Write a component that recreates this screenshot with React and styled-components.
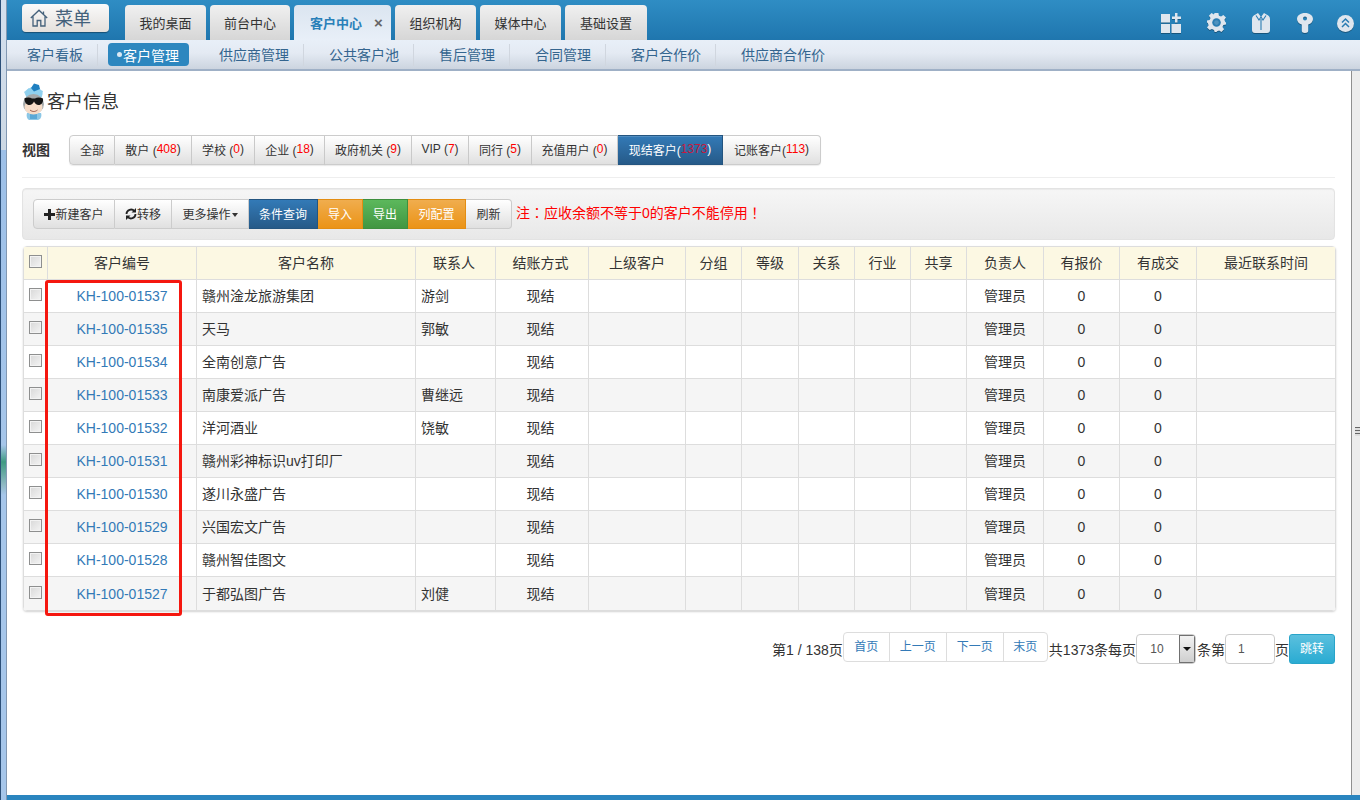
import React from 'react';
import styled, { createGlobalStyle } from 'styled-components';

const FONT = '"Liberation Sans", "Noto Sans CJK SC", sans-serif';

const Global = createGlobalStyle`
    html, body {
        margin: 0;
        padding: 0;
        height: 100%;
        overflow: hidden;
        background: #fff;
        font-family: ${FONT};
        color: #333;
    }
    * { box-sizing: border-box; }
`;

const Page = styled.div`
    display: flex;
    width: 1360px;
    height: 800px;
`;

const LeftEdge = styled.div`
    width: 7px;
    flex: none;
    border-right: 1px solid #8298b2;
    border-left: 1px solid #2c4f78;
    background: linear-gradient(180deg, #d3dfee 0, #ccd8e4 150px, #9dc0e8 150px, #a6c6ea 445px, #3f9a82 462px, #8fb9c4 485px, #a6c6ea 495px, #a6c6ea 100%);
`;

const Frame = styled.div`
    flex: 1;
    min-width: 0;
    display: flex;
    flex-direction: column;
`;

const Header = styled.header`
    height: 40px;
    flex: none;
    display: flex;
    align-items: flex-start;
    padding-left: 15px;
    background: linear-gradient(180deg, #2f8dc4 0, #1f76ae 100%);
`;

const MenuButton = styled.div`
    width: 87px;
    height: 28px;
    margin-top: 4px;
    display: flex;
    align-items: center;
    gap: 7px;
    padding: 0 0 2px 8px;
    border-radius: 4px;
    background: linear-gradient(180deg, #fafafa 0, #e4e0dc 100%);
    box-shadow: 0 1px 1px rgba(0, 0, 0, 0.35);
    color: #44617b;
    font-size: 18px;
`;

const MainTabs = styled.nav`
    display: flex;
    margin-left: 16px;
    margin-top: 5px;
    gap: 4px;
`;

const MainTab = styled.div`
    height: 35px;
    width: ${p => p.$w}px;
    display: flex;
    align-items: center;
    justify-content: ${p => (p.$active ? 'flex-start' : 'center')};
    gap: 12px;
    padding-left: ${p => (p.$active ? 16 : 0)}px;
    font-size: 13px;
    border-radius: 4px 4px 0 0;
    color: ${p => (p.$active ? '#2a80b9' : '#333')};
    font-weight: ${p => (p.$active ? 'bold' : 'normal')};
    background: ${p => (p.$active
        ? 'linear-gradient(180deg, #dbe5f0 0, #e8eff8 100%)'
        : 'linear-gradient(180deg, #f0f0f0 0, #d6d6d6 100%)')};
`;

const TabClose = styled.span`
    color: #666;
    font-size: 15px;
    font-weight: bold;
    line-height: 1;
`;

const IconTray = styled.div`
    margin-left: auto;
    display: flex;
    align-items: flex-start;
    padding: 13px 6px 0 0;
`;

const HeaderIcon = styled.svg`
    display: block;
    flex: none;
    margin-left: ${p => p.$gap}px;
    margin-top: ${p => p.$top || 0}px;
    filter: drop-shadow(0 1px 0 rgba(0, 0, 0, 0.3));
`;

const SubNav = styled.nav`
    height: 31px;
    flex: none;
    display: flex;
    align-items: center;
    padding-left: 20px;
    background: linear-gradient(180deg, #e8eff8 0, #e4eaf3 45%, #ccd4df 100%);
    border-bottom: 2px solid #9fb0c6;
`;

const SubItem = styled.div`
    font-size: 14px;
    line-height: 22px;
    color: #34658f;
    padding-right: 14px;
    margin-right: 25px;
    border-right: 1px solid #d0d6df;
    &:last-child { border-right: 0; }
`;

const SubItemActive = styled.div`
    display: flex;
    align-items: center;
    height: 23px;
    width: 81px;
    margin-left: -15px;
    margin-right: 30px;
    padding-left: 9px;
    font-size: 14px;
    color: #fff;
    background: #2d87bf;
    border-radius: 4px;
    &::before {
        content: '';
        width: 5px;
        height: 5px;
        margin-right: 1px;
        border-radius: 50%;
        background: #dbe9f4;
    }
`;

const Body = styled.div`
    flex: 1;
    min-height: 0;
    display: flex;
`;

const Content = styled.main`
    flex: 1;
    min-width: 0;
    position: relative;
    padding: 12px 16px 0 15px;
`;

const Splitter = styled.div`
    width: 9px;
    flex: none;
    display: flex;
    align-items: center;
    justify-content: flex-end;
    background: #ececec;
    border-left: 1px solid #8f8f8f;
`;

const Grip = styled.div`
    width: 5px;
    height: 9px;
    transform: translateY(-2px);
    background: repeating-linear-gradient(180deg, #666 0, #666 1px, #ddd 1px, #ddd 3px);
`;

const BottomBar = styled.div`
    height: 5px;
    flex: none;
    background: #2a85bf;
`;

const TitleRow = styled.div`
    display: flex;
    align-items: center;
    height: 38px;
`;

const PageTitle = styled.h1`
    margin: 0 0 5px 1px;
    font-size: 18px;
    font-weight: normal;
    color: #333;
`;

const ViewRow = styled.div`
    display: flex;
    align-items: center;
    margin-top: 14px;
    padding-bottom: 12px;
    border-bottom: 1px solid #eee;
`;

const ViewLabel = styled.b`
    font-size: 14px;
    width: 47px;
    color: #333;
    padding-bottom: 2px;
`;

const Segments = styled.div`
    display: flex;
    height: 30px;
`;

const ViewButton = styled.div`
    height: 30px;
    width: ${p => p.$w}px;
    display: flex;
    align-items: center;
    justify-content: center;
    padding-bottom: 2px;
    white-space: pre;
    font-size: 12px;
    color: ${p => (p.$active ? '#fff' : '#333')};
    border: 1px solid ${p => (p.$active ? '#245580' : '#ccc')};
    border-left-width: ${p => (p.$first ? 1 : 0)}px;
    border-radius: ${p => (p.$first ? '4px 0 0 4px' : p.$last ? '0 4px 4px 0' : '0')};
    background: ${p => (p.$active
        ? 'linear-gradient(180deg, #337ab7 0, #265a88 100%)'
        : 'linear-gradient(180deg, #fff 0, #e0e0e0 100%)')};
    box-shadow: inset 0 1px 0 rgba(255, 255, 255, 0.15), 0 1px 1px rgba(0, 0, 0, 0.08);
`;

const Count = styled.span`
    color: ${p => (p.$dim ? '#c8183c' : '#f00')};
`;

const Toolbar = styled.div`
    display: flex;
    align-items: center;
    height: 52px;
    margin-top: 10px;
    padding-left: 10px;
    border: 1px solid #e3e3e3;
    border-radius: 4px;
    background: linear-gradient(180deg, #f6f6f6 0, #e8e8e8 100%);
    box-shadow: inset 0 1px 1px rgba(0, 0, 0, 0.05);
`;

const TONES = {
    plain: ['#fff', '#e0e0e0', '#ccc', '#333'],
    blue: ['#337ab7', '#265a88', '#245580', '#fff'],
    orange: ['#f0ad4e', '#eb9316', '#e38d13', '#fff'],
    green: ['#5cb85c', '#419641', '#3e8f3e', '#fff'],
};

const ToolButton = styled.div`
    height: 30px;
    width: ${p => p.$w}px;
    flex: none;
    display: flex;
    align-items: center;
    justify-content: center;
    padding-bottom: 2px;
    font-size: 12px;
    color: ${p => TONES[p.$tone || 'plain'][3]};
    background: linear-gradient(180deg, ${p => TONES[p.$tone || 'plain'][0]} 0, ${p => TONES[p.$tone || 'plain'][1]} 100%);
    border: 1px solid ${p => TONES[p.$tone || 'plain'][2]};
    border-left-width: ${p => (p.$first ? 1 : 0)}px;
    border-radius: ${p => (p.$first ? '4px 0 0 4px' : p.$last ? '0 4px 4px 0' : '0')};
`;

const Caret = styled.i`
    width: 0;
    height: 0;
    margin-left: 1px;
    margin-top: 3px;
    border-top: 4px solid #333;
    border-left: 3.5px solid transparent;
    border-right: 3.5px solid transparent;
`;

const Notice = styled.span`
    margin-left: 4px;
    padding-bottom: 4px;
    font-family: "Liberation Sans", "Noto Sans CJK TC", sans-serif;
    font-size: 14px;
    color: #f00;
`;

const Table = styled.table`
    margin: 6px 0 0 1px;
    width: 1312px;
    table-layout: fixed;
    border-collapse: separate;
    border-spacing: 0;
    border: 1px solid #ddd;
    border-radius: 4px;
    box-shadow: 0 1px 2px rgba(0, 0, 0, 0.18);
    font-size: 14px;
`;

const HeadCell = styled.th`
    height: 33px;
    padding: 0 ${p => (p.$nudge ? 3 : 0)}px 2px 0;
    font-weight: normal;
    color: #333;
    text-align: center;
    background: #fcf8e3;
    border-right: 1px solid #ddd;
    border-bottom: 1px solid #ddd;
    &:last-child { border-right: 0; }
`;

const Cell = styled.td`
    height: 33px;
    padding: 0 ${p => (p.$nudge ? 3 : 0)}px ${p => (p.$num ? 0 : 2)}px ${p => (p.$left ? 5 : 0)}px;
    text-align: ${p => (p.$left ? 'left' : 'center')};
    color: #333;
    border-right: 1px solid #ddd;
    border-bottom: 1px solid #ddd;
    &:last-child { border-right: 0; }
    tr:last-child > & { border-bottom: 0; }
`;

const Row = styled.tr`
    background: ${p => (p.$odd ? '#f5f5f5' : '#fff')};
`;

const CodeLink = styled.a`
    color: #337ab7;
    text-decoration: none;
`;

const Check = styled.span`
    display: block;
    width: 13px;
    height: 13px;
    margin: -1px auto 0 5px;
    border: 1px solid #8e8f8f;
    background: linear-gradient(135deg, #d8d8d8 0, #f4f4f4 100%);
    box-shadow: inset 0 0 0 1px #f3f3f3;
`;

const Highlight = styled.div`
    position: absolute;
    left: 38px;
    top: 209px;
    width: 137px;
    height: 336px;
    border: 3px solid #f5170f;
    border-radius: 3px;
    pointer-events: none;
`;

const Pager = styled.div`
    display: flex;
    justify-content: flex-end;
    align-items: center;
    margin-top: 21px;
    height: 33px;
    font-size: 14px;
    color: #333;
`;

const PagerLinks = styled.div`
    display: flex;
    align-self: flex-start;
    height: 30px;
    margin-right: 1px;
    border: 1px solid #ddd;
    border-radius: 4px;
`;

const PagerLink = styled.a`
    width: ${p => p.$w}px;
    display: flex;
    align-items: center;
    justify-content: center;
    padding-bottom: 4px;
    font-size: 12px;
    color: #337ab7;
    border-left: ${p => (p.$first ? '0' : '1px solid #ddd')};
`;

const SelectBox = styled.div`
    width: 60px;
    height: 30px;
    margin-right: 1px;
    display: flex;
    align-items: center;
    border: 1px solid #ccc;
    border-radius: 4px;
    font-size: 12px;
    color: #555;
    overflow: hidden;
`;

const SelectValue = styled.span`
    flex: 1;
    text-align: center;
    padding-right: 2px;
`;

const SelectArrow = styled.span`
    width: 16px;
    height: 28px;
    display: flex;
    align-items: center;
    justify-content: center;
    border: 1px solid #707070;
    background: linear-gradient(180deg, #f2f2f2 0, #cfcfcf 100%);
    &::after {
        content: '';
        border-top: 4px solid #111;
        border-left: 4px solid transparent;
        border-right: 4px solid transparent;
    }
`;

const PageInput = styled.div`
    width: 50px;
    height: 30px;
    display: flex;
    align-items: center;
    padding-left: 12px;
    border: 1px solid #ccc;
    border-radius: 4px;
    font-size: 12px;
    color: #555;
`;

const JumpButton = styled.div`
    width: 46px;
    height: 30px;
    display: flex;
    align-items: center;
    justify-content: center;
    padding-bottom: 2px;
    font-size: 12px;
    color: #fff;
    border: 1px solid #28a4c9;
    border-radius: 3px;
    background: linear-gradient(180deg, #5bc0de 0, #2aabd2 100%);
`;

function Mascot() {
    return (
        <svg width="24" height="38" viewBox="0 0 24 38" style={{ display: 'block', flex: 'none' }}>
            <path d="M5 30c-1 3 0 6 2 7h9c3-1 4-4 3-7z" fill="#8cc7e6" />
            <path d="M8 31h7v5H8z" fill="#5aa8d6" />
            <path d="M2 9 7 5l2 5-5 3zM21 8l-5-2-1 5 5 1z" fill="#9ad3ee" />
            <ellipse cx="12" cy="11" rx="8.500" ry="7" fill="#8fd0ee" />
            <path d="M9 5l3-4.500 5 1.500 1 4-6 2.500z" fill="#1f7fc0" />
            <ellipse cx="11.500" cy="21" rx="10.500" ry="10" fill="#a3a8aa" />
            <ellipse cx="11.500" cy="24" rx="9" ry="7.500" fill="#f6dcc8" />
            <path d="M2 15.500c3-1.500 6-1.500 8 0h3c2-1.500 5-1.500 8 0 .5 4-1.500 6.500-4.500 6.500-2 0-3.500-1.500-4.500-3.500-1 2-2.500 3.500-4.500 3.500-3 0-5-2.500-5-6.500z" fill="#151515" />
            <path d="M8 27c2.500 2 5 2 7.500 0" stroke="#9b5a4a" strokeWidth="1" fill="none" />
        </svg>
    );
}

function HomeIcon() {
    return (
        <svg width="18" height="18" viewBox="0 0 18 18" fill="none" stroke="#44617b" strokeWidth="1.300" style={{ marginTop: 2 }}>
            <path d="M.8 9 9 1.200 17.200 9M3 7.500v9.500h4.200v-5.500h3.600V17H15V7.500M13.500 2.500v3" />
        </svg>
    );
}

function HeaderIcons() {
    return (
        <IconTray>
            <HeaderIcon $gap={0} width="20" height="20" viewBox="0 0 20 20" fill="#dfe6ee">
                <path d="M0 1h9v8.500H0zM0 11h9v9H0zM10.500 11H20v9h-9.500zM14 0h2.500v3.500H20V6h-3.500v3.500H14V6h-3V3.500h3z" />
            </HeaderIcon>
            <HeaderIcon $gap={26} width="19" height="19" viewBox="0 0 20 20">
                <path fill="#dfe6ee" fillRule="evenodd" d="M8 0h4l.6 2.800 2.200.9L17.200 2 20 4.800l-1.700 2.400.9 2.200L20 10v2l-2.800.6-.9 2.200 1.700 2.400-2.800 2.800-2.400-1.700-2.200.9L10 20H8l-.6-2.200-2.200-.9L2.800 18 0 15.200l1.700-2.400-.9-2.200L0 10V8l2.800-.6.900-2.200L2 2.800 4.800 0l2.400 1.700z" />
                <circle cx="10" cy="10" r="4.500" fill="#2a7db3" />
                <circle cx="10" cy="10" r="2.500" fill="#dfe6ee" opacity="0.2" />
            </HeaderIcon>
            <HeaderIcon $gap={26} width="18" height="20" viewBox="0 0 18 20">
                <path fill="#dfe6ee" d="M3.500 1.500 6 0l3 4 3-4 2.500 1.500C16.500 2.500 18 3.500 18 6v11c0 2-1 3-3 3H3c-2 0-3-1-3-3V6c0-2.500 1.500-3.500 3.500-4.500z" />
                <path fill="none" stroke="#2a7cb2" strokeWidth="1.100" d="M4 2.500 7 7l2-3 2 3 3-4.500M9 6v11" />
            </HeaderIcon>
            <HeaderIcon $gap={27} width="16" height="20" viewBox="0 0 16 20">
                <path fill="#dfe6ee" fillRule="evenodd" d="M8 0c4.500 0 8 2.500 8 6 0 2.700-2 4.600-4.800 5.500V18c0 1.300-1.200 2-3.200 2s-3.200-.7-3.200-2v-6.500C2 10.600 0 8.700 0 6c0-3.500 3.500-6 8-6zm0 3.500a2 2 0 1 0 0 4 2 2 0 0 0 0-4z" />
            </HeaderIcon>
            <HeaderIcon $gap={24} $top={2} width="17" height="17" viewBox="0 0 17 17">
                <circle cx="8.500" cy="8.500" r="8.500" fill="#dfe6ee" />
                <path d="M5 7.500 8.500 4 12 7.500M5 12l3.500-3.500L12 12" fill="none" stroke="#2a7cb2" strokeWidth="1.500" />
            </HeaderIcon>
        </IconTray>
    );
}

const MAIN_TABS = [
    ['我的桌面', 81], ['前台中心', 80], ['客户中心', 97, true], ['组织机构', 81], ['媒体中心', 81], ['基础设置', 82],
];

const SUB_ITEMS = ['供应商管理', '公共客户池', '售后管理', '合同管理', '客户合作价', '供应商合作价'];

const VIEWS = [
    ['全部', null, 46], ['散户 ', 408, 77], ['学校 ', 0, 63], ['企业 ', 18, 70], ['政府机关 ', 9, 87],
    ['VIP ', 7, 57], ['同行 ', 5, 63], ['充值用户 ', 0, 86], ['现结客户', 1373, 105, true], ['记账客户', 113, 98],
];

const COLUMNS = [
    ['客户编号', 149], ['客户名称', 219], ['联系人', 80, true], ['结账方式', 93, true], ['上级客户', 97], ['分组', 56], ['等级', 57],
    ['关系', 56], ['行业', 56], ['共享', 56], ['负责人', 77], ['有报价', 76], ['有成交', 77], ['最近联系时间', 138],
];

const CUSTOMERS = [
    ['KH-100-01537', '赣州淦龙旅游集团', '游剑'],
    ['KH-100-01535', '天马', '郭敏'],
    ['KH-100-01534', '全南创意广告', ''],
    ['KH-100-01533', '南康爱派广告', '曹继远'],
    ['KH-100-01532', '洋河酒业', '饶敏'],
    ['KH-100-01531', '赣州彩神标识uv打印厂', ''],
    ['KH-100-01530', '遂川永盛广告', ''],
    ['KH-100-01529', '兴国宏文广告', ''],
    ['KH-100-01528', '赣州智佳图文', ''],
    ['KH-100-01527', '于都弘图广告', '刘健'],
];

export default function App() {
    return (
        <Page>
            <Global />
            <LeftEdge />
            <Frame>
                <Header>
                    <MenuButton><HomeIcon />菜单</MenuButton>
                    <MainTabs>
                        {MAIN_TABS.map(([name, w, active]) => (
                            <MainTab key={name} $w={w} $active={active}>
                                {name}
                                {active && <TabClose>×</TabClose>}
                            </MainTab>
                        ))}
                    </MainTabs>
                    <HeaderIcons />
                </Header>
                <SubNav>
                    <SubItem>客户看板</SubItem>
                    <SubItemActive>客户管理</SubItemActive>
                    {SUB_ITEMS.map(name => <SubItem key={name}>{name}</SubItem>)}
                </SubNav>
                <Body>
                    <Content>
                        <TitleRow>
                            <Mascot />
                            <PageTitle>客户信息</PageTitle>
                        </TitleRow>
                        <ViewRow>
                            <ViewLabel>视图</ViewLabel>
                            <Segments>
                                {VIEWS.map(([name, count, w, active], i) => (
                                    <ViewButton key={name} $w={w} $active={active} $first={i === 0} $last={i === VIEWS.length - 1}>
                                        {name}
                                        {count !== null && <>(<Count $dim={active}>{count}</Count>)</>}
                                    </ViewButton>
                                ))}
                            </Segments>
                        </ViewRow>
                        <Toolbar>
                            <ToolButton $w={82} $first>
                                <svg width="11" height="11" viewBox="0 0 11 11" style={{ marginTop: 2 }}><path d="M4 0h3v4h4v3H7v4H4V7H0V4h4z" fill="#222" /></svg>
                                新建客户
                            </ToolButton>
                            <ToolButton $w={57}>
                                <svg width="12" height="12" viewBox="0 0 12 12" fill="none" stroke="#222" strokeWidth="1.800" style={{ marginTop: 2 }}>
                                    <path d="M1.500 6a4.500 4.500 0 0 1 8-2.800M10.500 6a4.500 4.500 0 0 1-8 2.800" />
                                    <path d="M11 0v4.500H6.500zM1 12V7.500h4.500z" fill="#222" stroke="none" />
                                </svg>
                                转移
                            </ToolButton>
                            <ToolButton $w={77}>更多操作<Caret /></ToolButton>
                            <ToolButton $w={69} $tone="blue">条件查询</ToolButton>
                            <ToolButton $w={45} $tone="orange">导入</ToolButton>
                            <ToolButton $w={45} $tone="green">导出</ToolButton>
                            <ToolButton $w={58} $tone="orange">列配置</ToolButton>
                            <ToolButton $w={46} $last>刷新</ToolButton>
                            <Notice>注：应收余额不等于0的客户不能停用！</Notice>
                        </Toolbar>
                        <Table>
                            <colgroup>
                                <col width="24" />
                                {COLUMNS.map(([name, w]) => <col key={name} width={w} />)}
                            </colgroup>
                            <thead>
                                <tr>
                                    <HeadCell><Check /></HeadCell>
                                    {COLUMNS.map(([name, , nudge]) => <HeadCell key={name} $nudge={nudge}>{name}</HeadCell>)}
                                </tr>
                            </thead>
                            <tbody>
                                {CUSTOMERS.map(([code, name, contact], i) => (
                                    <Row key={code} $odd={i % 2 === 1}>
                                        <Cell><Check /></Cell>
                                        <Cell $num><CodeLink>{code}</CodeLink></Cell>
                                        <Cell $left>{name}</Cell>
                                        <Cell $left>{contact}</Cell>
                                        <Cell $nudge>现结</Cell>
                                        <Cell /><Cell /><Cell /><Cell /><Cell /><Cell />
                                        <Cell>管理员</Cell>
                                        <Cell $num>0</Cell>
                                        <Cell $num>0</Cell>
                                        <Cell />
                                    </Row>
                                ))}
                            </tbody>
                        </Table>
                        <Pager>
                            第1 / 138页
                            <PagerLinks>
                                <PagerLink $w={45} $first>首页</PagerLink>
                                <PagerLink $w={57}>上一页</PagerLink>
                                <PagerLink $w={57}>下一页</PagerLink>
                                <PagerLink $w={44}>末页</PagerLink>
                            </PagerLinks>
                            共1373条每页
                            <SelectBox>
                                <SelectValue>10</SelectValue>
                                <SelectArrow />
                            </SelectBox>
                            条第
                            <PageInput>1</PageInput>
                            页
                            <JumpButton>跳转</JumpButton>
                        </Pager>
                        <Highlight />
                    </Content>
                    <Splitter><Grip /></Splitter>
                </Body>
                <BottomBar />
            </Frame>
        </Page>
    );
}
